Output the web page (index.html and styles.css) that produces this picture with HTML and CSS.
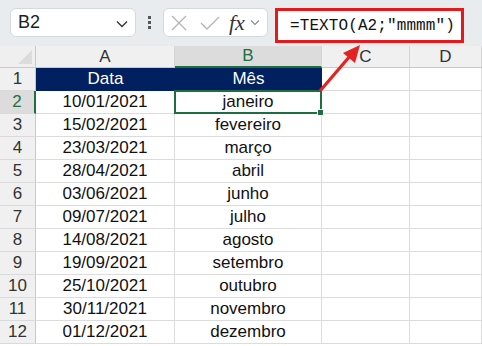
FILE: index.html
```html
<!DOCTYPE html>
<html lang="pt">
<head>
  <meta charset="UTF-8" />
  <title>TEXTO mmmm</title>
  <link rel="stylesheet" href="styles.css">
</head>
<body>
  <div class="toolbar">
    <div class="namebox">
      <span>B2</span>
      <svg class="chev" width="12" height="8" viewBox="0 0 12 8"><path d="M1 1.5 L6 6.5 L11 1.5" fill="none" stroke="#333" stroke-width="1.3"/></svg>
    </div>
    <div class="dots"><i></i><i></i><i></i></div>
    <div class="fxgroup">
      <svg class="ic-x" width="18" height="18" viewBox="0 0 18 18"><path d="M2 2 L16 16 M16 2 L2 16" stroke="#b4b4b4" stroke-width="1.3"/></svg>
      <svg class="ic-ok" width="20" height="18" viewBox="0 0 20 18"><path d="M1 9 L7 15 L19 3" fill="none" stroke="#b4b4b4" stroke-width="1.3"/></svg>
      <span class="fx">fx</span>
      <svg width="10" height="7" viewBox="0 0 10 7"><path d="M1 1.5 L5 5.5 L9 1.5" fill="none" stroke="#8a8a8a" stroke-width="1.1"/></svg>
    </div>
    <div class="formula">=TEXTO(A2;"mmmm")</div>
  </div>

  <div class="sheet">
    <div class="corner"></div>
    <div class="colhead">A</div>
    <div class="colhead active">B</div>
    <div class="colhead">C</div>
    <div class="colhead">D</div>

    <div class="rowhead">1</div>
    <div class="cell title">Data</div>
    <div class="cell title">Mês</div>
    <div class="cell"></div>
    <div class="cell"></div>

    <div class="rowhead active">2</div>
    <div class="cell">10/01/2021</div>
    <div class="cell selected">janeiro</div>
    <div class="cell"></div>
    <div class="cell"></div>

    <div class="rowhead">3</div>
    <div class="cell">15/02/2021</div>
    <div class="cell">fevereiro</div>
    <div class="cell"></div>
    <div class="cell"></div>

    <div class="rowhead">4</div>
    <div class="cell">23/03/2021</div>
    <div class="cell">março</div>
    <div class="cell"></div>
    <div class="cell"></div>

    <div class="rowhead">5</div>
    <div class="cell">28/04/2021</div>
    <div class="cell">abril</div>
    <div class="cell"></div>
    <div class="cell"></div>

    <div class="rowhead">6</div>
    <div class="cell">03/06/2021</div>
    <div class="cell">junho</div>
    <div class="cell"></div>
    <div class="cell"></div>

    <div class="rowhead">7</div>
    <div class="cell">09/07/2021</div>
    <div class="cell">julho</div>
    <div class="cell"></div>
    <div class="cell"></div>

    <div class="rowhead">8</div>
    <div class="cell">14/08/2021</div>
    <div class="cell">agosto</div>
    <div class="cell"></div>
    <div class="cell"></div>

    <div class="rowhead">9</div>
    <div class="cell">19/09/2021</div>
    <div class="cell">setembro</div>
    <div class="cell"></div>
    <div class="cell"></div>

    <div class="rowhead">10</div>
    <div class="cell">25/10/2021</div>
    <div class="cell">outubro</div>
    <div class="cell"></div>
    <div class="cell"></div>

    <div class="rowhead">11</div>
    <div class="cell">30/11/2021</div>
    <div class="cell">novembro</div>
    <div class="cell"></div>
    <div class="cell"></div>

    <div class="rowhead">12</div>
    <div class="cell">01/12/2021</div>
    <div class="cell">dezembro</div>
    <div class="cell"></div>
    <div class="cell"></div>
  </div>

  <!-- arrow pointing from B2 to the formula -->
  <svg class="arrow" width="482" height="346" viewBox="0 0 482 346">
    <line x1="320" y1="91" x2="350" y2="56" stroke="#e52222" stroke-width="3.2"/>
    <polygon points="360,45 343,53 355,63" fill="#e52222"/>
  </svg>
</body>
</html>
```

FILE: styles.css
```css
body {
  margin: 0;
  width: 482px;
  height: 346px;
  overflow: hidden;
  background: #fff;
  font-family: "Liberation Sans", Arial, sans-serif;
  color: #222;
}

.toolbar {
  height: 46px;
  background: #e8ecef;
  display: flex;
  align-items: flex-start;
  padding: 8px 0 0 10px;
  box-sizing: border-box;
}

.namebox {
  width: 126px;
  height: 29px;
  background: #fff;
  border: 1px solid #d6d9dc;
  border-radius: 6px;
  box-sizing: border-box;
  display: flex;
  align-items: center;
  justify-content: space-between;
  padding: 0 7px 0 7px;
  font-size: 18px;
  color: #1e1e1e;
}

.namebox .chev {
  margin-top: 2px;
}

.dots {
  width: 27px;
  height: 29px;
  display: flex;
  flex-direction: column;
  align-items: center;
  justify-content: center;
  gap: 2px;
}

.dots i {
  width: 3px;
  height: 3px;
  background: #555;
}

.fxgroup {
  width: 105px;
  height: 29px;
  background: #fff;
  border: 1px solid #d6d9dc;
  border-radius: 6px;
  box-sizing: border-box;
  display: flex;
  align-items: center;
  padding: 0 4px 0 6px;
}

.ic-ok {
  margin-left: 12px;
}

.fx {
  font-family: "Liberation Serif", "Times New Roman", serif;
  font-style: italic;
  font-size: 22px;
  color: #333;
  margin-left: 9px;
  margin-right: 5px;
}

.formula {
  margin-left: 7px;
  width: 189px;
  height: 35px;
  border: 3px solid #e3191b;
  background: #fff;
  box-sizing: border-box;
  display: flex;
  align-items: center;
  padding-left: 12px;
  font-family: "Liberation Mono", "Courier New", monospace;
  font-size: 16px;
  color: #111;
  letter-spacing: 0.1px;
}

.sheet {
  display: grid;
  grid-template-columns: 36px 139px 147px 88px 72px;
  grid-template-rows: 22px repeat(12, 23px);
}

.corner {
  background: #efefef;
  border-right: 1px solid #c9c9c9;
  border-bottom: 1px solid #c9c9c9;
  position: relative;
}

.corner::after {
  content: "";
  position: absolute;
  right: 3px;
  bottom: 3px;
  border-left: 14px solid transparent;
  border-bottom: 14px solid #dcdcdc;
}

.colhead {
  background: #f0f0f0;
  border-right: 1px solid #d4d4d4;
  border-bottom: 1px solid #c9c9c9;
  display: flex;
  align-items: center;
  justify-content: center;
  font-size: 17px;
  color: #333;
}

.colhead.active {
  background: #dcdcdc;
  border-bottom: 2px solid #1e6e42;
  color: #1e6e42;
}

.rowhead {
  background: #f0f0f0;
  border-right: 1px solid #c9c9c9;
  border-bottom: 1px solid #dadada;
  display: flex;
  align-items: center;
  justify-content: center;
  font-size: 17px;
  color: #333;
}

.rowhead.active {
  background: #dcdcdc;
  border-right: 2px solid #1e6e42;
  color: #1e6e42;
}

.cell {
  border-right: 1px solid #dcdcdc;
  border-bottom: 1px solid #dcdcdc;
  display: flex;
  align-items: center;
  justify-content: center;
  font-size: 17px;
  color: #111;
}

.cell.title {
  background: #002060;
  color: #fff;
  border-right: none;
  border-bottom-color: #002060;
}

.cell.selected {
  position: relative;
}

.cell.selected::before {
  content: "";
  position: absolute;
  left: -1px;
  top: -1px;
  right: -1px;
  bottom: -1px;
  border: 2px solid #1e6e42;
}

.cell.selected::after {
  content: "";
  position: absolute;
  right: -3px;
  bottom: -3px;
  width: 5px;
  height: 5px;
  background: #1e6e42;
  border: 1px solid #fff;
}

.arrow {
  position: absolute;
  left: 0;
  top: 0;
  pointer-events: none;
}
```
